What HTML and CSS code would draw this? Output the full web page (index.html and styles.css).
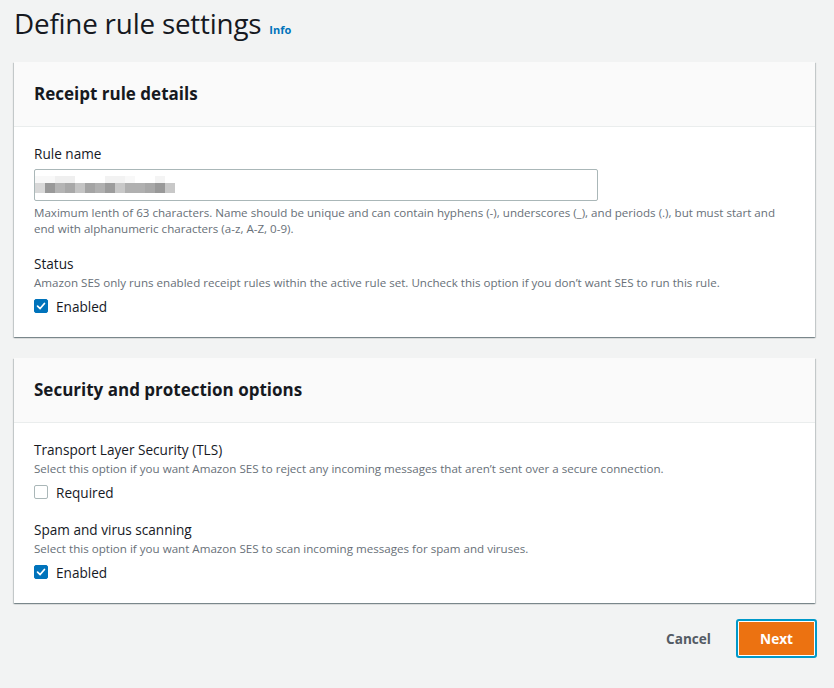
FILE: index.html
```html
<!DOCTYPE html>
<html lang="en">
<head>
<meta charset="utf-8">
<title>Define rule settings</title>
<link rel="stylesheet" href="styles.css">
</head>
<body>
<div class="page">
  <div class="title-row">
    <h1 class="title">Define rule settings</h1>
    <a class="info">Info</a>
  </div>

  <section class="card">
    <div class="card-header"><h2>Receipt rule details</h2></div>
    <div class="card-body">
      <div class="field">
        <div class="label">Rule name</div>
        <div class="input">
          <div class="blur">
            <div class="blur-row top">
              <i style="width:10px;background:#f8f8f8"></i><i style="width:10px;background:#f8f8f8"></i><i style="width:20px;background:#efefef"></i><i style="width:30px;background:#fff"></i><i style="width:20px;background:#f2f2f2"></i><i style="width:10px;background:#f8f8f8"></i><i style="width:20px;background:#fff"></i><i style="width:10px;background:#f4f4f4"></i>
            </div>
            <div class="blur-row">
              <i style="width:10px;background:#d8d8d8"></i><i style="width:10px;background:#999"></i><i style="width:10px;background:#b4b4b4"></i><i style="width:10px;background:#a8a8a8"></i><i style="width:10px;background:#c4c4c4"></i><i style="width:10px;background:#a4a4a4"></i><i style="width:10px;background:#b0b0b0"></i><i style="width:10px;background:#9c9c9c"></i><i style="width:10px;background:#c8c8c8"></i><i style="width:10px;background:#b0b0b0"></i><i style="width:10px;background:#b0b0b0"></i><i style="width:10px;background:#a8a8a8"></i><i style="width:10px;background:#999"></i><i style="width:10px;background:#c8c8c8"></i>
            </div>
          </div>
        </div>
        <div class="desc">Maximum lenth of 63 characters. Name should be unique and can contain hyphens (-), underscores (_), and periods (.), but must start and<br>end with alphanumeric characters (a-z, A-Z, 0-9).</div>
      </div>
      <div class="field gap">
        <div class="label">Status</div>
        <div class="desc">Amazon SES only runs enabled receipt rules within the active rule set. Uncheck this option if you don’t want SES to run this rule.</div>
        <label class="check">
          <span class="box on"><svg viewBox="0 0 14 14" width="14" height="14"><path d="M3 7.2 L6 10 L11 4" fill="none" stroke="#fff" stroke-width="2" stroke-linecap="round" stroke-linejoin="round"/></svg></span>
          <span>Enabled</span>
        </label>
      </div>
    </div>
  </section>

  <section class="card">
    <div class="card-header"><h2>Security and protection options</h2></div>
    <div class="card-body">
      <div class="field">
        <div class="label">Transport Layer Security (TLS)</div>
        <div class="desc">Select this option if you want Amazon SES to reject any incoming messages that aren’t sent over a secure connection.</div>
        <label class="check">
          <span class="box"></span>
          <span>Required</span>
        </label>
      </div>
      <div class="field gap2">
        <div class="label">Spam and virus scanning</div>
        <div class="desc">Select this option if you want Amazon SES to scan incoming messages for spam and viruses.</div>
        <label class="check">
          <span class="box on"><svg viewBox="0 0 14 14" width="14" height="14"><path d="M3 7.2 L6 10 L11 4" fill="none" stroke="#fff" stroke-width="2" stroke-linecap="round" stroke-linejoin="round"/></svg></span>
          <span>Enabled</span>
        </label>
      </div>
    </div>
  </section>

  <div class="actions">
    <button class="btn-link">Cancel</button>
    <button class="btn-primary">Next</button>
  </div>
</div>
</body>
</html>
```

FILE: styles.css
```css
* { box-sizing: border-box; }
html, body { margin: 0; padding: 0; }
body {
  background: #f2f3f3;
  font-family: "Open Sans", "Noto Sans", sans-serif;
  color: #16191f;
  width: 834px;
  height: 688px;
  overflow: hidden;
}
.page {
  padding: 0 19px 0 14px;
}
.title-row {
  display: flex;
  align-items: baseline;
  height: 62px;
  padding-top: 3px;
}
.title {
  margin: 0;
  font-size: 27.8px;
  font-weight: 400;
  line-height: 40px;
  letter-spacing: -0.2px;
}
.info {
  margin-left: 8px;
  font-size: 11px;
  font-weight: 700;
  color: #0073bb;
}
.card {
  background: #fff;
  box-shadow: 0 1px 1px 0 rgba(0,28,36,.3), 1px 1px 1px 0 rgba(0,28,36,.15), -1px 1px 1px 0 rgba(0,28,36,.15);
  margin-bottom: 21px;
}
.card-header {
  background: #fafafa;
  border-bottom: 1px solid #eaeded;
  padding: 20px 20px 20px;
}
.card-header h2 {
  margin: 0;
  font-size: 17px;
  font-weight: 700;
  line-height: 24px;
}
.card-body {
  padding: 17px 20px 21px;
}
.label {
  font-size: 13.6px;
  line-height: 20px;
}
.label + .desc { margin-top: 1px; }
.input {
  margin-top: 5px;
  width: 564px;
  height: 32px;
  border: 1px solid #aab7b8;
  border-radius: 2px;
  display: flex;
  align-items: center;
}
.blur { margin-top: -2px; }
.blur-row { display: flex; height: 10px; }
.blur-row.top { height: 7px; }
.blur-row i { display: block; height: 100%; }
.desc {
  font-size: 11.6px;
  line-height: 16px;
  color: #687078;
}
.input + .desc { margin-top: 4px; }
.gap { margin-top: 17px; }
.gap2 { margin-top: 18px; }
.check {
  display: flex;
  align-items: center;
  height: 20px;
  margin-top: 5px;
  font-size: 13.6px;
}
.box {
  width: 14px;
  height: 14px;
  border: 1px solid #aab7b8;
  border-radius: 2px;
  margin-right: 8px;
  display: flex;
  align-items: center;
  justify-content: center;
  background: #fff;
}
.box.on {
  background: #0073bb;
  border-color: #0073bb;
}
.box svg { display: block; }
.actions {
  display: flex;
  justify-content: flex-end;
  align-items: center;
  margin-top: -5px;
  margin-right: -2px;
}
.btn-link {
  background: none;
  border: none;
  font-family: inherit;
  font-weight: 700;
  font-size: 13.6px;
  color: #545b64;
  padding: 0 20px;
  margin-right: 5px;
}
.btn-primary {
  width: 81px;
  height: 39px;
  background: #ec7211;
  color: #fff;
  font-family: inherit;
  font-weight: 700;
  font-size: 13.6px;
  border: 2px solid #0099c9;
  border-radius: 3px;
  box-shadow: inset 0 0 0 1px #fff;
  padding: 0;
}
```
